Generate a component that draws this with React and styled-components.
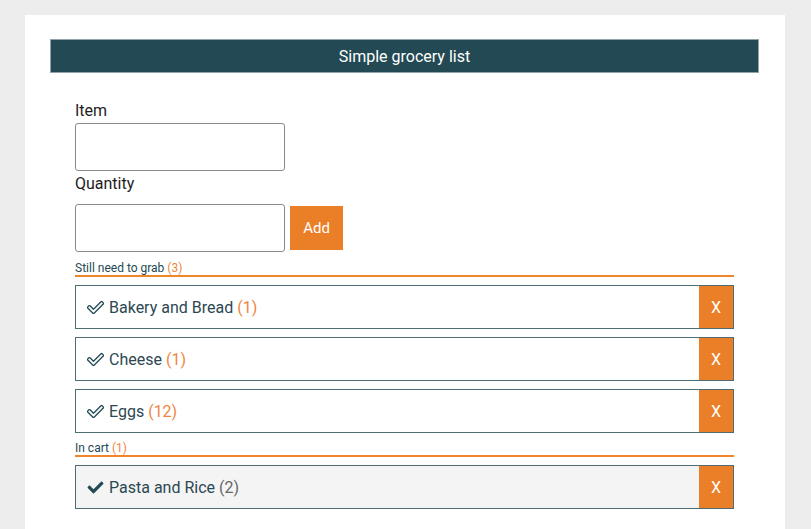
import styled, { createGlobalStyle } from "styled-components"

const Global = createGlobalStyle`
    body {
        margin: 0;
        background: #ededed;
        font-family: Roboto, "Liberation Sans", sans-serif;
    }
`
const Page = styled.div`
    padding: 15px 26px 0 25px;
`
const Panel = styled.main`
    background: #fff;
    min-height: 514px;
    padding: 24px 26px 20px 25px;
    box-sizing: border-box;
`
const Header = styled.header`
    background: #234a54;
    border: 1px solid #8fa3a8;
    color: #fff;
    height: 34px;
    box-sizing: border-box;
    display: flex;
    align-items: center;
    justify-content: center;
    font-size: 16px;
`
const Body = styled.section`
    padding: 28px 25px 0 25px;
`
const Label = styled.label`
    display: block;
    font-size: 16px;
    color: #1d1d1d;
    line-height: 19px;
    margin-bottom: ${({gap}) => gap || 3}px;
`
const Row = styled.div`
    display: flex;
    align-items: center;
    gap: 5px;
    margin-bottom: ${({gap}) => gap || 0}px;
`
const Input = styled.input`
    width: 210px;
    height: 48px;
    box-sizing: border-box;
    border: 1px solid #8a8a8a;
    border-radius: 3px;
    padding: 0 8px;
    font-size: 16px;
`
const AddButton = styled.button`
    width: 53px;
    height: 44px;
    border: none;
    background: #ea7f28;
    color: #fff;
    font-size: 15px;
    font-family: inherit;
`
const SectionTitle = styled.div`
    font-size: 12px;
    color: #234a54;
    line-height: 12px;
    padding-bottom: 1px;
    border-bottom: 2px solid #f0862a;
    margin-bottom: 8px;
`
const Count = styled.span`
    color: ${({muted}) => muted ? "#666" : "#ef8540"};
`
const List = styled.ul`
    list-style: none;
    margin: 0 0 9px 0;
    padding: 0;
    display: flex;
    flex-direction: column;
    gap: 8px;
`
const Item = styled.li`
    display: flex;
    align-items: stretch;
    height: 44px;
    box-sizing: border-box;
    border: 1px solid #4f6c74;
    background: ${({done}) => done ? "#f4f4f4" : "#fff"};
`
const ItemName = styled.div`
    flex: 1;
    display: flex;
    align-items: center;
    gap: 5px;
    padding-left: 11px;
    font-size: 16px;
    color: #2b4852;
`
const RemoveButton = styled.button`
    width: 34px;
    border: none;
    background: #ea7f28;
    color: #fff;
    font-size: 16px;
    font-family: inherit;
    padding: 0;
`

const checkPath = "M173.898 439.404l-166.4-166.4c-9.997-9.997-9.997-26.206 0-36.204l36.203-36.204c9.997-9.998 26.207-9.998 36.204 0L192 312.69 432.095 72.596c9.997-9.997 26.207-9.997 36.204 0l36.203 36.204c9.997 9.997 9.997 26.206 0 36.204l-294.4 294.401c-9.998 9.997-26.207 9.997-36.204-.001z"

const Check = ({solid}) => (
    <svg width="17" height="17" viewBox="-16 -16 544 544">
        {solid
            ? <path d={checkPath} fill="#234a54" />
            : <path d={checkPath} fill="none" stroke="#234a54" strokeWidth="42" strokeLinejoin="round" />}
    </svg>
)

const todo = [
    {name: "Bakery and Bread", qty: 1},
    {name: "Cheese", qty: 1},
    {name: "Eggs", qty: 12},
]
const cart = [
    {name: "Pasta and Rice", qty: 2},
]

const App = () => {
  return (
    <Page>
        <Global />
        <Panel>
            <Header>Simple grocery list</Header>
            <Body>
                <Label>Item</Label>
                <Row gap={3}>
                    <Input type="text" />
                </Row>
                <Label gap={11}>Quantity</Label>
                <Row gap={10}>
                    <Input type="text" />
                    <AddButton>Add</AddButton>
                </Row>
                <SectionTitle>Still need to grab <Count>(3)</Count></SectionTitle>
                <List>
                    {todo.map(i => (
                        <Item key={i.name}>
                            <ItemName><Check /><span>{i.name} <Count>({i.qty})</Count></span></ItemName>
                            <RemoveButton>X</RemoveButton>
                        </Item>
                    ))}
                </List>
                <SectionTitle>In cart <Count>(1)</Count></SectionTitle>
                <List>
                    {cart.map(i => (
                        <Item key={i.name} done>
                            <ItemName><Check solid /><span>{i.name} <Count muted>({i.qty})</Count></span></ItemName>
                            <RemoveButton>X</RemoveButton>
                        </Item>
                    ))}
                </List>
            </Body>
        </Panel>
    </Page>
  )
}

export default App
